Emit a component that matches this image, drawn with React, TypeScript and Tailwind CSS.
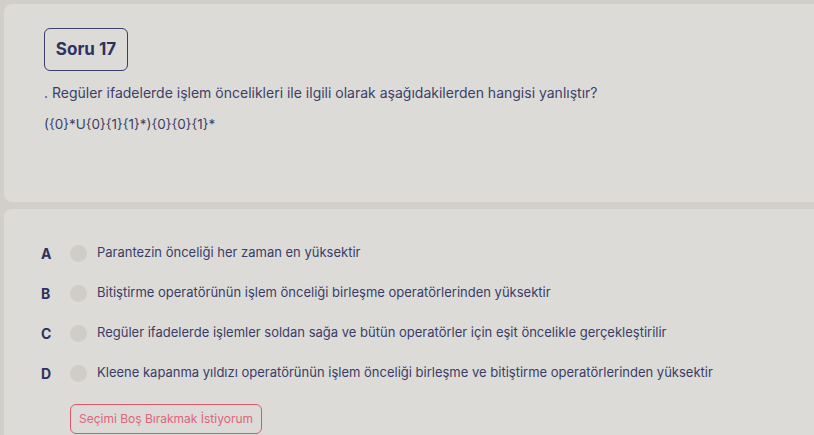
export default function App() {
  const options = [
    { key: "A", text: "Parantezin önceliği her zaman en yüksektir" },
    { key: "B", text: "Bitiştirme operatörünün işlem önceliği birleşme operatörlerinden yüksektir" },
    { key: "C", text: "Regüler ifadelerde işlemler soldan sağa ve bütün operatörler için eşit öncelikle gerçekleştirilir" },
    { key: "D", text: "Kleene kapanma yıldızı operatörünün işlem önceliği birleşme ve bitiştirme operatörlerinden yüksektir" },
  ];

  return (
    <div
      className="h-[435px] w-[814px] overflow-hidden bg-[#d2cfcb] pl-[4px] pt-[4px]"
      style={{ fontFamily: "Inter, 'Noto Sans', sans-serif" }}
    >
      <div className="h-[198px] rounded-l-lg bg-[#dcdbd7] pl-[40px] pt-[24px]">
        <div className="flex h-[43px] w-[84px] items-center justify-center rounded-md border border-[#3b3e6c] text-[17px] font-bold text-[#2f3260]">
          Soru 17
        </div>
        <p className="mt-[12px] text-[14px] leading-5 text-[#3c3f6a]">
          . Regüler ifadelerde işlem öncelikleri ile ilgili olarak aşağıdakilerden hangisi yanlıştır?
        </p>
        <p className="mt-[11px] text-[13.5px] leading-5 text-[#3c3f6a]">({"{0}*U{0}{1}{1}*)"}{"{0}{0}{1}*"}</p>
      </div>

      <div className="mt-[7px] h-[240px] rounded-l-lg bg-[#dcdbd7] pl-[37px] pt-[24px]">
        {options.map((o) => (
          <div key={o.key} className="flex h-10 items-center">
            <span className="w-[29px] text-[14px] font-bold text-[#2e3160]">{o.key}</span>
            <span className="h-[17px] w-[17px] shrink-0 rounded-full bg-[#d0cdc9]" />
            <span className="ml-[10px] text-[13px] text-[#3a3d68]">{o.text}</span>
          </div>
        ))}
        <button className="ml-[29px] mt-[11px] h-[30px] w-[192px] rounded-md border border-[#e0566a] text-[12px] text-[#e0647a]">
          Seçimi Boş Bırakmak İstiyorum
        </button>
      </div>
    </div>
  );
}
